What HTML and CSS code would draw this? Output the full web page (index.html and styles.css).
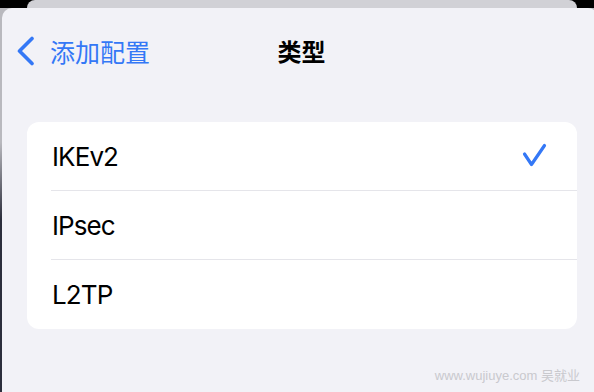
FILE: index.html
```html
<!DOCTYPE html>
<html lang="zh-CN">
<head>
<meta charset="utf-8">
<title>类型</title>
<link rel="stylesheet" href="styles.css">
</head>
<body>
<div class="backdrop"><div class="back-sheet"></div></div>
<div class="stage">
  <div class="sheet">
    <div class="nav">
      <div class="nav-left">
        <svg class="chevron" width="20" height="30" viewBox="0 0 20 30">
          <path d="M16 2.5 L3.5 15 L16 27.5" fill="none" stroke="#3478f6" stroke-width="3.6" stroke-linecap="round" stroke-linejoin="round"/>
        </svg>
        <span class="back-label">添加配置</span>
      </div>
      <div class="nav-title">类型</div>
      <div class="nav-right"></div>
    </div>
    <ul class="card">
      <li class="row"><span class="row-label">IKEv2</span>
        <svg class="check" width="26" height="26" viewBox="0 0 26 26">
          <path d="M2.5 11 L9.5 21.5 L22.5 2.5" fill="none" stroke="#3478f6" stroke-width="3.2" stroke-linecap="round" stroke-linejoin="round"/>
        </svg>
      </li>
      <li class="row"><span class="row-label">IPsec</span></li>
      <li class="row"><span class="row-label">L2TP</span></li>
    </ul>
    <div class="watermark">www.wujiuye.com 吴就业</div>
  </div>
</div>
</body>
</html>
```
FILE: styles.css
```css
html, body {
  margin: 0;
  padding: 0;
}
body {
  width: 594px;
  height: 392px;
  overflow: hidden;
  background: #000;
  font-family: "Inter", "Noto Sans CJK SC", sans-serif;
}
.backdrop {
  height: 8px;
  background: #000;
  display: flex;
}
.back-sheet {
  margin-left: 27px;
  width: 550px;
  height: 8px;
  background: #d1d1d6;
  border-radius: 8px 8px 0 0;
}
.stage {
  height: 384px;
  background: linear-gradient(to bottom, #b9b9be 0%, #b9b9be 35%, #2c2e3c 55%, #2c2e3c 100%);
  padding-left: 2px;
}
.sheet {
  width: 596px;
  height: 384px;
  background: #f2f2f7;
  border-radius: 10px 10px 0 0;
  padding-top: 21px;
  box-sizing: border-box;
  display: flex;
  flex-direction: column;
}
.nav {
  height: 44px;
  display: grid;
  grid-template-columns: 1fr auto 1fr;
  align-items: center;
}
.nav-left {
  display: flex;
  align-items: center;
  padding-left: 14px;
  gap: 14px;
}
.chevron {
  display: block;
}
.back-label {
  font-family: "Noto Sans CJK SC", sans-serif;
  font-size: 25px;
  color: #3478f6;
  line-height: 44px;
}
.nav-title {
  font-family: "Noto Sans CJK SC", sans-serif;
  font-size: 24px;
  font-weight: 700;
  color: #000;
  line-height: 44px;
  padding-left: 3px;
}
.card {
  list-style: none;
  margin: 49px 21px 0 25px;
  padding: 0;
  background: #fff;
  border-radius: 12px;
  overflow: hidden;
}
.row {
  height: 69px;
  display: flex;
  align-items: center;
  justify-content: space-between;
  margin-left: 24px;
  padding-right: 29px;
  box-sizing: border-box;
  border-bottom: 1px solid #e5e5ea;
}
.row:last-child {
  border-bottom: none;
}
.row-label {
  font-size: 26px;
  letter-spacing: -0.9px;
  color: #000;
  padding-left: 1px;
}
.check {
  display: block;
}
.watermark {
  margin-top: 37px;
  padding-right: 18px;
  text-align: right;
  font-family: "Liberation Sans", "Noto Sans CJK SC", sans-serif;
  font-size: 13px;
  line-height: 20px;
  color: #c9c9ce;
}
```
